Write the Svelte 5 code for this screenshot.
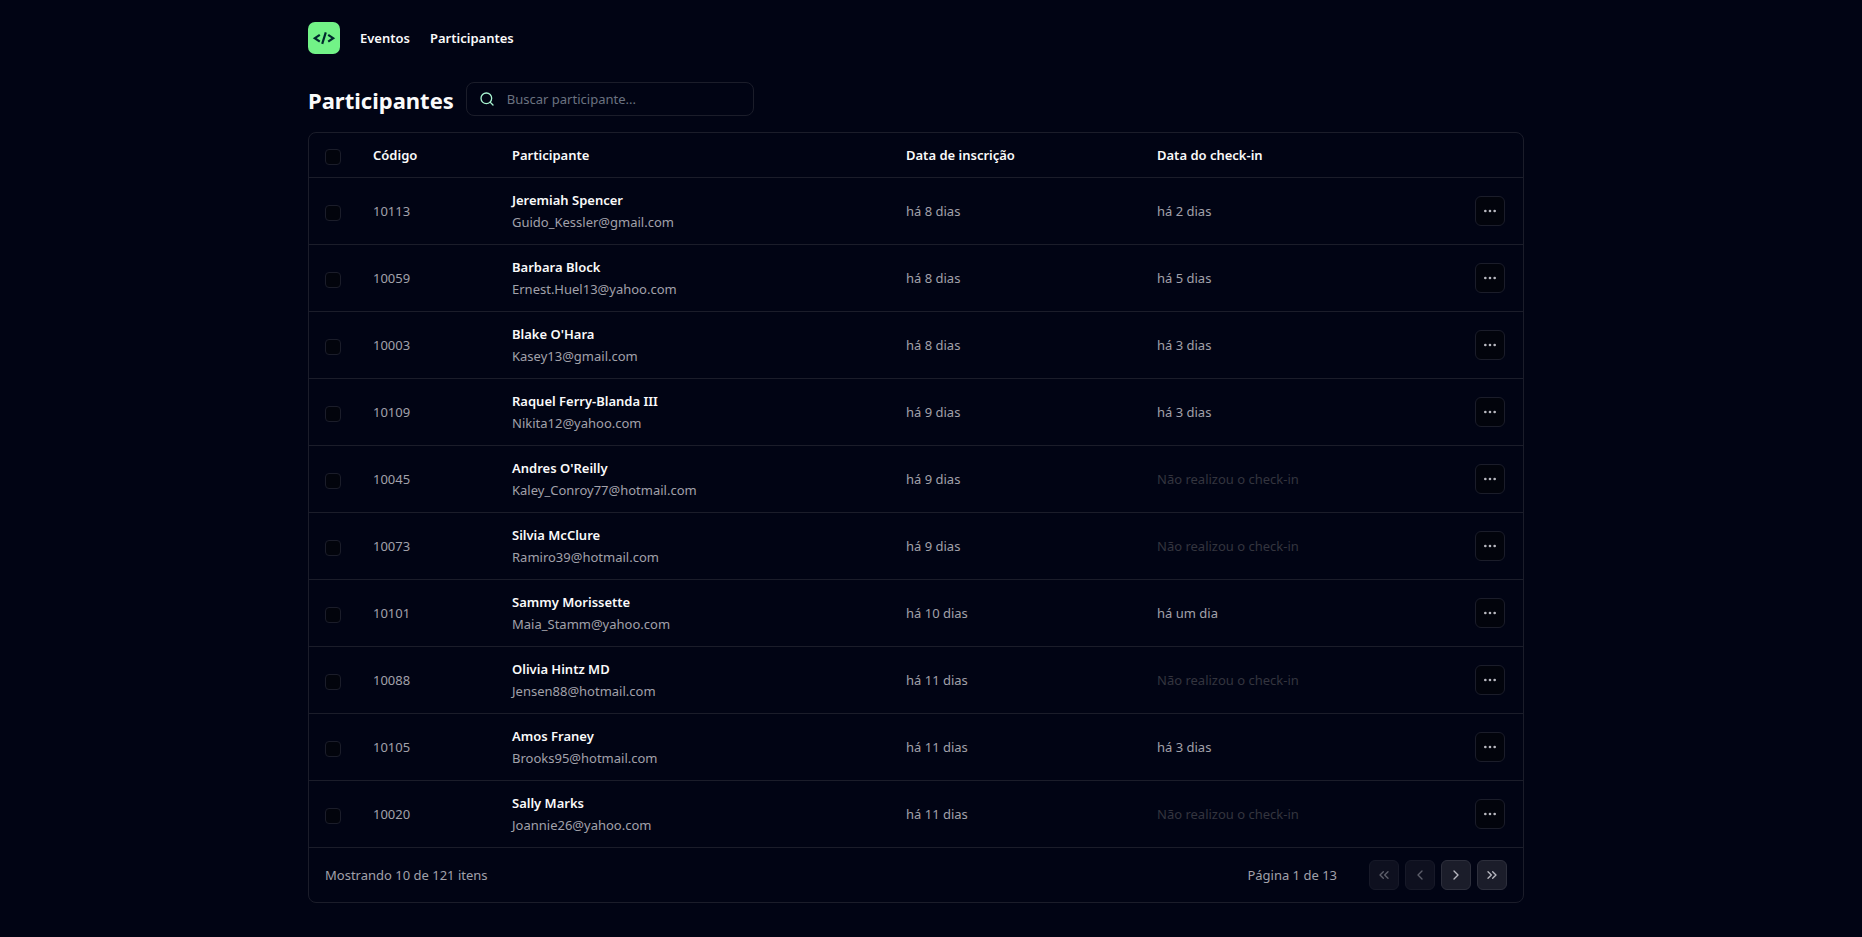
<script>
  const participants = [
    { code: '10113', name: 'Jeremiah Spencer', email: 'Guido_Kessler@gmail.com', enrolled: 'há 8 dias', checkIn: 'há 2 dias' },
    { code: '10059', name: 'Barbara Block', email: 'Ernest.Huel13@yahoo.com', enrolled: 'há 8 dias', checkIn: 'há 5 dias' },
    { code: '10003', name: "Blake O'Hara", email: 'Kasey13@gmail.com', enrolled: 'há 8 dias', checkIn: 'há 3 dias' },
    { code: '10109', name: 'Raquel Ferry-Blanda III', email: 'Nikita12@yahoo.com', enrolled: 'há 9 dias', checkIn: 'há 3 dias' },
    { code: '10045', name: "Andres O'Reilly", email: 'Kaley_Conroy77@hotmail.com', enrolled: 'há 9 dias', checkIn: null },
    { code: '10073', name: 'Silvia McClure', email: 'Ramiro39@hotmail.com', enrolled: 'há 9 dias', checkIn: null },
    { code: '10101', name: 'Sammy Morissette', email: 'Maia_Stamm@yahoo.com', enrolled: 'há 10 dias', checkIn: 'há um dia' },
    { code: '10088', name: 'Olivia Hintz MD', email: 'Jensen88@hotmail.com', enrolled: 'há 11 dias', checkIn: null },
    { code: '10105', name: 'Amos Franey', email: 'Brooks95@hotmail.com', enrolled: 'há 11 dias', checkIn: 'há 3 dias' },
    { code: '10020', name: 'Sally Marks', email: 'Joannie26@yahoo.com', enrolled: 'há 11 dias', checkIn: null },
  ];

  const pageButtons = [
    { label: 'Primeira página', paths: ['m11 17-5-5 5-5', 'm18 17-5-5 5-5'], disabled: true },
    { label: 'Página anterior', paths: ['m15 18-6-6 6-6'], disabled: true },
    { label: 'Próxima página', paths: ['m9 18 6-6-6-6'], disabled: false },
    { label: 'Última página', paths: ['m6 17 5-5-5-5', 'm13 17 5-5-5-5'], disabled: false },
  ];
</script>

<div class="page">
  <header>
    <svg class="logo" viewBox="0 0 32 32" aria-hidden="true">
      <rect width="32" height="32" rx="7" fill="#72f387" />
      <g fill="none" stroke="#00292e" stroke-width="2.2">
        <path d="M11.8 12.8 6.8 16.2l5 3.4" />
        <path d="M17.8 10.4 14.2 21.8" />
        <path d="m20.2 12.8 5 3.4-5 3.4" />
      </g>
    </svg>
    <nav>
      <a href="#eventos">Eventos</a>
      <a href="#participantes">Participantes</a>
    </nav>
  </header>

  <main>
    <div class="title-row">
      <h1>Participantes</h1>
      <label class="search">
        <svg viewBox="0 0 24 24" aria-hidden="true">
          <circle cx="11" cy="11" r="8" />
          <path d="m21 21-4.3-4.3" />
        </svg>
        <input type="text" aria-label="Buscar participante" placeholder="Buscar participante..." />
      </label>
    </div>

    <div class="card">
      <table>
        <colgroup>
          <col class="col-check" />
          <col class="col-code" />
          <col class="col-person" />
          <col class="col-enrolled" />
          <col class="col-checkin" />
          <col class="col-actions" />
        </colgroup>
        <thead>
          <tr>
            <th><input type="checkbox" aria-label="Selecionar todos" /></th>
            <th>Código</th>
            <th>Participante</th>
            <th>Data de inscrição</th>
            <th>Data do check-in</th>
            <th></th>
          </tr>
        </thead>
        <tbody>
          {#each participants as p (p.code)}
            <tr>
              <td><input type="checkbox" aria-label={`Selecionar ${p.name}`} /></td>
              <td>{p.code}</td>
              <td>
                <div class="person">
                  <strong>{p.name}</strong>
                  <span>{p.email}</span>
                </div>
              </td>
              <td>{p.enrolled}</td>
              <td>
                {#if p.checkIn}{p.checkIn}{:else}<span class="missing">Não realizou o check-in</span>{/if}
              </td>
              <td>
                <button class="icon-button more" type="button" aria-label={`Ações de ${p.name}`}>
                  <svg viewBox="0 0 24 24" aria-hidden="true">
                    <circle cx="12" cy="12" r="1" />
                    <circle cx="19" cy="12" r="1" />
                    <circle cx="5" cy="12" r="1" />
                  </svg>
                </button>
              </td>
            </tr>
          {/each}
        </tbody>
      </table>
      <footer>
        <span>Mostrando 10 de 121 itens</span>
        <div class="pagination">
          <span>Página 1 de 13</span>
          <div class="buttons">
            {#each pageButtons as b (b.label)}
              <button class="icon-button" type="button" aria-label={b.label} disabled={b.disabled}>
                <svg viewBox="0 0 24 24" aria-hidden="true">
                  {#each b.paths as d (d)}
                    <path {d} />
                  {/each}
                </svg>
              </button>
            {/each}
          </div>
        </div>
      </footer>
    </div>
  </main>
</div>

<style>
  :global(body) {
    background: #010414;
    padding-right: 30px;
  }

  .page {
    box-sizing: border-box;
    max-width: 1216px;
    margin: 0 auto;
    padding: 22px 0 34px;
    color: #d4d4d8;
    font: 13px/20px 'Noto Sans', sans-serif;
  }

  header {
    display: flex;
    align-items: center;
    gap: 20px;
    margin-bottom: 28px;
  }

  .logo {
    width: 32px;
    height: 32px;
  }

  nav {
    display: flex;
    gap: 20px;
  }

  nav a {
    color: #fafafa;
    font-weight: 600;
    text-decoration: none;
  }

  .title-row {
    display: flex;
    align-items: center;
    gap: 12px;
    margin-bottom: 16px;
  }

  h1 {
    margin: 0;
    padding-top: 2px;
    color: #fafafa;
    font-size: 22px;
    line-height: 32px;
    font-weight: 700;
  }

  .search {
    box-sizing: border-box;
    display: flex;
    align-items: center;
    gap: 12px;
    width: 288px;
    height: 34px;
    padding: 0 12px;
    border: 1px solid #1b1d2a;
    border-radius: 8px;
  }

  .search svg {
    flex: none;
    width: 16px;
    height: 16px;
    fill: none;
    stroke: #a7f3d0;
    stroke-width: 2;
    stroke-linecap: round;
  }

  .search input {
    flex: 1;
    min-width: 0;
    padding: 0;
    border: 0;
    outline: 0;
    background: transparent;
    color: #d4d4d8;
    font: inherit;
  }

  .search input::placeholder {
    color: #6b7280;
  }

  .card {
    border: 1px solid #1b1d2a;
    border-radius: 8px;
  }

  table {
    width: 100%;
    table-layout: fixed;
    border-collapse: collapse;
  }

  .col-check { width: 48px; }
  .col-code { width: 139px; }
  .col-person { width: 394px; }
  .col-enrolled { width: 251px; }
  .col-actions { width: 64px; }

  tr {
    border-bottom: 1px solid #1b1d2a;
  }

  th,
  td {
    padding: 0 16px;
    text-align: left;
  }

  th {
    height: 44px;
    color: #fafafa;
    font-weight: 600;
  }

  td {
    height: 66px;
    color: #a1a1aa;
  }

  input[type='checkbox'] {
    appearance: none;
    display: block;
    width: 16px;
    height: 16px;
    margin: 3px 0 0;
    border: 1px solid #1b1d2a;
    border-radius: 4px;
    background: #02040c;
  }

  .person {
    display: flex;
    flex-direction: column;
    gap: 2px;
  }

  .person strong {
    color: #fafafa;
    font-weight: 600;
  }

  .missing {
    color: #34353f;
  }

  .icon-button {
    box-sizing: border-box;
    display: grid;
    place-items: center;
    width: 30px;
    height: 30px;
    padding: 0;
    border: 1px solid #2d2f3c;
    border-radius: 6px;
    background: #1b1d2a;
    color: #b8b8c0;
  }

  .icon-button:disabled {
    opacity: 0.5;
  }

  .icon-button svg {
    width: 16px;
    height: 16px;
    fill: none;
    stroke: currentColor;
    stroke-width: 2;
    stroke-linecap: round;
    stroke-linejoin: round;
  }

  .icon-button.more {
    border-color: #1b1d2a;
    background: #02040c;
  }

  footer {
    display: flex;
    align-items: center;
    justify-content: space-between;
    height: 54px;
    padding: 0 16px;
    color: #a1a1aa;
  }

  .pagination {
    display: flex;
    align-items: center;
    gap: 32px;
  }

  .buttons {
    display: flex;
    gap: 6px;
  }
</style>
